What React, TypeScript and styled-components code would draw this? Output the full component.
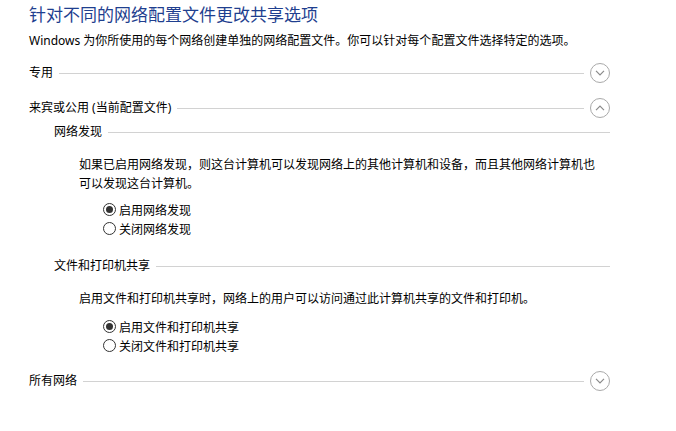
import styled, { createGlobalStyle } from 'styled-components';

const GlobalStyle = createGlobalStyle`
  body {
    margin: 0;
    background: #ffffff;
    font-family: "Noto Sans", "Noto Sans CJK SC", sans-serif;
    font-size: 12px;
    color: #000000;
  }
`;

const Page = styled.div`
  width: 581px;
  padding: 4px 0 0 29px;
  display: flex;
  flex-direction: column;
`;

const Title = styled.h1`
  margin: 0;
  font-size: 17px;
  font-weight: 400;
  line-height: 22px;
  color: #1f3f8f;
  font-family: "Noto Sans", "Noto Sans CJK SC", sans-serif;
`;

const Description = styled.p`
  margin: 6px 0 0;
  line-height: 18px;
  white-space: nowrap;
`;

const HeaderRow = styled.div<{ $indent?: number; $top: number; $height?: number }>`
  display: flex;
  align-items: center;
  height: ${(p) => p.$height ?? 22}px;
  margin-top: ${(p) => p.$top}px;
  margin-left: ${(p) => p.$indent ?? 0}px;
`;

const HeaderLabel = styled.span`
  line-height: 18px;
  white-space: nowrap;
`;

const Rule = styled.div`
  flex: 1;
  height: 1px;
  background: #d2d2d2;
  margin-left: 6px;
`;

const ToggleButton = styled.button`
  width: 20px;
  height: 20px;
  margin-left: 6px;
  padding: 0;
  border: 1px solid #a9a9a9;
  border-radius: 50%;
  background: #ffffff;
  display: flex;
  align-items: center;
  justify-content: center;
  cursor: pointer;
`;

const Section = styled.div<{ $indent: number }>`
  display: flex;
  flex-direction: column;
  margin-left: ${(p) => p.$indent}px;
`;

const Paragraph = styled.p<{ $top: number }>`
  margin: ${(p) => p.$top}px 0 0;
  line-height: 19px;
  white-space: nowrap;
`;

const RadioGroup = styled.div<{ $top: number }>`
  display: flex;
  flex-direction: column;
  margin: ${(p) => p.$top}px 0 0 24px;
`;

const RadioRow = styled.label`
  display: flex;
  align-items: center;
  height: 19px;
  gap: 3px;
  cursor: pointer;
`;

const RadioCircle = styled.span<{ $checked?: boolean }>`
  width: 13px;
  height: 13px;
  box-sizing: border-box;
  border: 1px solid #333333;
  border-radius: 50%;
  display: flex;
  align-items: center;
  justify-content: center;

  &::after {
    content: '';
    width: 7px;
    height: 7px;
    border-radius: 50%;
    background: ${(p) => (p.$checked ? '#333333' : 'transparent')};
  }
`;

function Chevron({ up }: { up?: boolean }) {
  return (
    <svg width="10" height="6" viewBox="0 0 10 6">
      <path
        d={up ? 'M1 5.2 L5 1.2 L9 5.2' : 'M1 0.8 L5 4.8 L9 0.8'}
        fill="none"
        stroke="#8a8a8a"
        strokeWidth="1.2"
      />
    </svg>
  );
}

function Radio({ label, checked }: { label: string; checked?: boolean }) {
  return (
    <RadioRow>
      <RadioCircle $checked={checked} />
      {label}
    </RadioRow>
  );
}

export default function App() {
  return (
    <>
      <GlobalStyle />
      <Page>
        <Title>针对不同的网络配置文件更改共享选项</Title>
        <Description>
          Windows 为你所使用的每个网络创建单独的网络配置文件。你可以针对每个配置文件选择特定的选项。
        </Description>

        <HeaderRow $top={12}>
          <HeaderLabel>专用</HeaderLabel>
          <Rule />
          <ToggleButton>
            <Chevron />
          </ToggleButton>
        </HeaderRow>

        <HeaderRow $top={13}>
          <HeaderLabel>来宾或公用 (当前配置文件)</HeaderLabel>
          <Rule />
          <ToggleButton>
            <Chevron up />
          </ToggleButton>
        </HeaderRow>

        <HeaderRow $top={4} $indent={25} $height={18}>
          <HeaderLabel>网络发现</HeaderLabel>
          <Rule />
        </HeaderRow>
        <Section $indent={50}>
          <Paragraph $top={14}>
            如果已启用网络发现，则这台计算机可以发现网络上的其他计算机和设备，而且其他网络计算机也
            <br />
            可以发现这台计算机。
          </Paragraph>
          <RadioGroup $top={7}>
            <Radio label="启用网络发现" checked />
            <Radio label="关闭网络发现" />
          </RadioGroup>
        </Section>

        <HeaderRow $top={19} $indent={25} $height={18}>
          <HeaderLabel>文件和打印机共享</HeaderLabel>
          <Rule />
        </HeaderRow>
        <Section $indent={50}>
          <Paragraph $top={14}>
            启用文件和打印机共享时，网络上的用户可以访问通过此计算机共享的文件和打印机。
          </Paragraph>
          <RadioGroup $top={9}>
            <Radio label="启用文件和打印机共享" checked />
            <Radio label="关闭文件和打印机共享" />
          </RadioGroup>
        </Section>

        <HeaderRow $top={15}>
          <HeaderLabel>所有网络</HeaderLabel>
          <Rule />
          <ToggleButton>
            <Chevron />
          </ToggleButton>
        </HeaderRow>
      </Page>
    </>
  );
}
